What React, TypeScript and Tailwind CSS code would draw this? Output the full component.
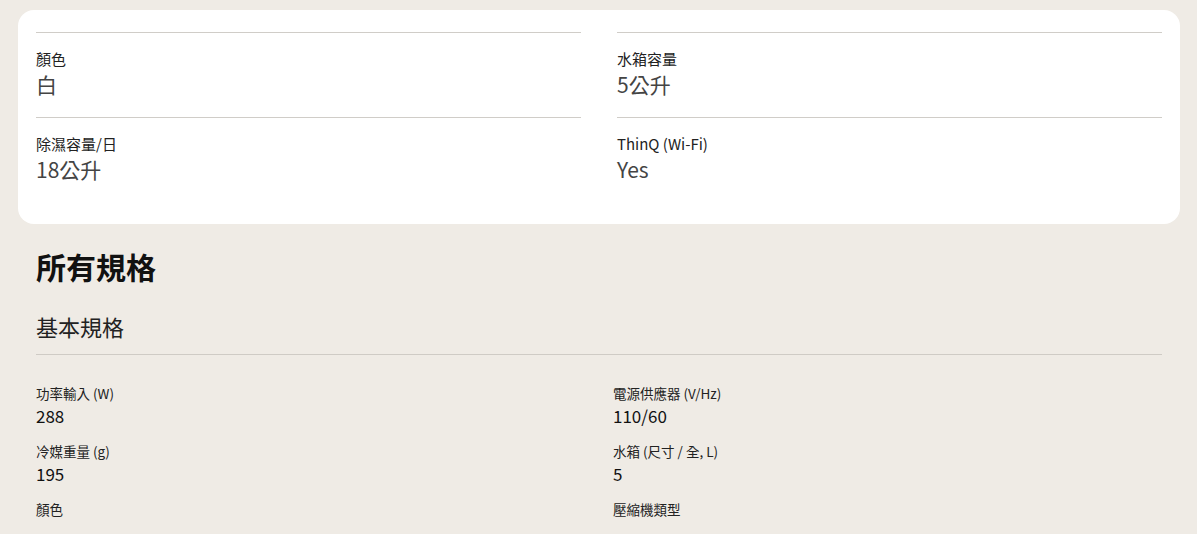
import React from "react";

const font = { fontFamily: '"Noto Sans CJK TC", "Noto Sans", sans-serif' };

const cardItems = [
  [
    { label: "顏色", value: "白" },
    { label: "除濕容量/日", value: "18公升" },
  ],
  [
    { label: "水箱容量", value: "5公升" },
    { label: "ThinQ (Wi-Fi)", value: "Yes" },
  ],
];

const specs = [
  [
    { label: "功率輸入 (W)", value: "288" },
    { label: "冷媒重量 (g)", value: "195" },
    { label: "顏色", value: "" },
  ],
  [
    { label: "電源供應器 (V/Hz)", value: "110/60" },
    { label: "水箱 (尺寸 / 全, L)", value: "5" },
    { label: "壓縮機類型", value: "" },
  ],
];

export default function App() {
  return (
    <div className="min-h-[534px] w-[1197px] bg-[#efebe5] pt-[10px] overflow-hidden" style={font}>
      <div className="ml-[18px] w-[1162px] rounded-[16px] bg-white px-[18px] pt-[22px] pb-[22px]">
        <div className="grid grid-cols-2 gap-x-[36px]">
          {cardItems.map((col, ci) => (
            <div key={ci} className="flex flex-col">
              {col.map((it) => (
                <div key={it.label} className="border-t border-[#d0cdc8] pt-[16px] pb-[19px]">
                  <div className="text-[15px] leading-[20px] text-[#222]">{it.label}</div>
                  <div className="mt-[1px] text-[21px] leading-[28px] text-[#444]">{it.value}</div>
                </div>
              ))}
            </div>
          ))}
        </div>
      </div>
      <div className="px-[36px] w-[1197px]">
        <h2 className="mt-[24px] text-[30px] leading-[36px] font-bold text-[#111]">所有規格</h2>
        <h3 className="mt-[28px] text-[22px] leading-[28px] text-[#222] pb-[14px] border-b border-[#cfcbc5] w-[1126px]">
          基本規格
        </h3>
        <div className="grid grid-cols-[553px_553px] gap-x-[24px] pt-[29px]">
          {specs.map((col, ci) => (
            <div key={ci} className="flex flex-col gap-[15px]">
              {col.map((it) => (
                <div key={it.label}>
                  <div className="text-[13.5px] leading-[18px] text-[#222]">{it.label}</div>
                  {it.value && (
                    <div className="mt-[2px] text-[17px] leading-[23px] text-[#111]">{it.value}</div>
                  )}
                </div>
              ))}
            </div>
          ))}
        </div>
      </div>
    </div>
  );
}
